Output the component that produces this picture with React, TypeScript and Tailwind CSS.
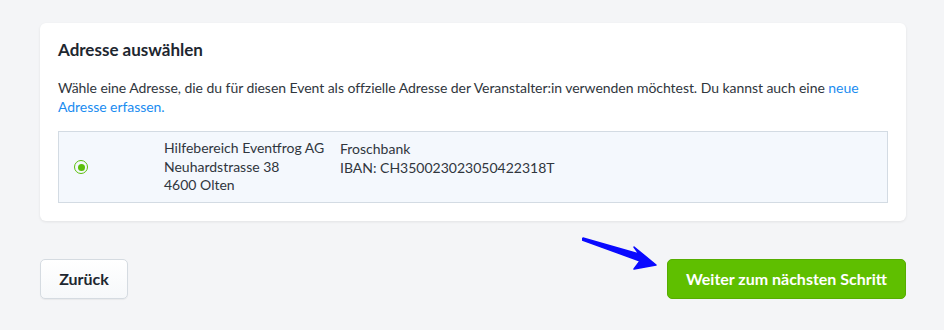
import React from "react";

export default function App() {
  return (
    <div
      className="w-[944px] h-[330px] bg-[#f4f5f7] pl-[40px] pr-[38px] pt-[23px] text-[#1f2933]"
      style={{ fontFamily: "Lato, 'Open Sans', sans-serif" }}
    >
      <div className="bg-white rounded-[6px] shadow-[0_1px_3px_rgba(0,0,0,0.08)] px-[18px] pt-[16px] pb-[18px]">
        <h2 className="text-[17px] font-bold leading-[22px] text-[#1e2730]">Adresse auswählen</h2>
        <p className="mt-[17px] text-[14px] leading-[19px] text-[#30363d] tracking-[-0.05px]">
          Wähle eine Adresse, die du für diesen Event als offzielle Adresse der Veranstalter:in verwenden möchtest. Du kannst auch eine{" "}
          <a className="text-[#1a8cf0]">neue Adresse erfassen.</a>
        </p>
        <div className="mt-[15px] flex items-center bg-[#f4f8fd] border border-[#d3dbe3] h-[72px] text-[14px] leading-[18.5px] text-[#30363d]">
          <div className="w-[105px] flex pl-[15px]">
            <span className="w-[14px] h-[14px] rounded-full border-[1.5px] border-[#5bbf0a] flex items-center justify-center">
              <span className="w-[7px] h-[7px] rounded-full bg-[#5bbf0a]" />
            </span>
          </div>
          <div className="w-[176px]">
            <div>Hilfebereich Eventfrog AG</div>
            <div>Neuhardstrasse 38</div>
            <div>4600 Olten</div>
          </div>
          <div className="self-start pt-[8px]">
            <div>Froschbank</div>
            <div>IBAN: CH350023023050422318T</div>
          </div>
        </div>
      </div>
      <div className="mt-[38px] flex items-center justify-between relative">
        <button className="w-[88px] h-[40px] rounded-[5px] border border-[#d5dbe1] bg-gradient-to-b from-white to-[#f6f8fa] text-[16px] font-bold text-[#1e2730] shadow-[0_1px_1px_rgba(0,0,0,0.05)]">
          Zurück
        </button>
        <svg className="absolute left-[542px] top-[-22px]" width="80" height="36" viewBox="0 0 80 36">
          <polygon points="1,1 57,17 52,10 74,28 52,32 58,24 0,3" fill="#0a0aff" strokeLinejoin="round" stroke="#0a0aff" strokeWidth="1.5" />
        </svg>
        <button className="w-[239px] h-[40px] rounded-[5px] border border-[#56ad00] bg-[#5fbf00] text-[16px] font-bold text-white">
          Weiter zum nächsten Schritt
        </button>
      </div>
    </div>
  );
}
